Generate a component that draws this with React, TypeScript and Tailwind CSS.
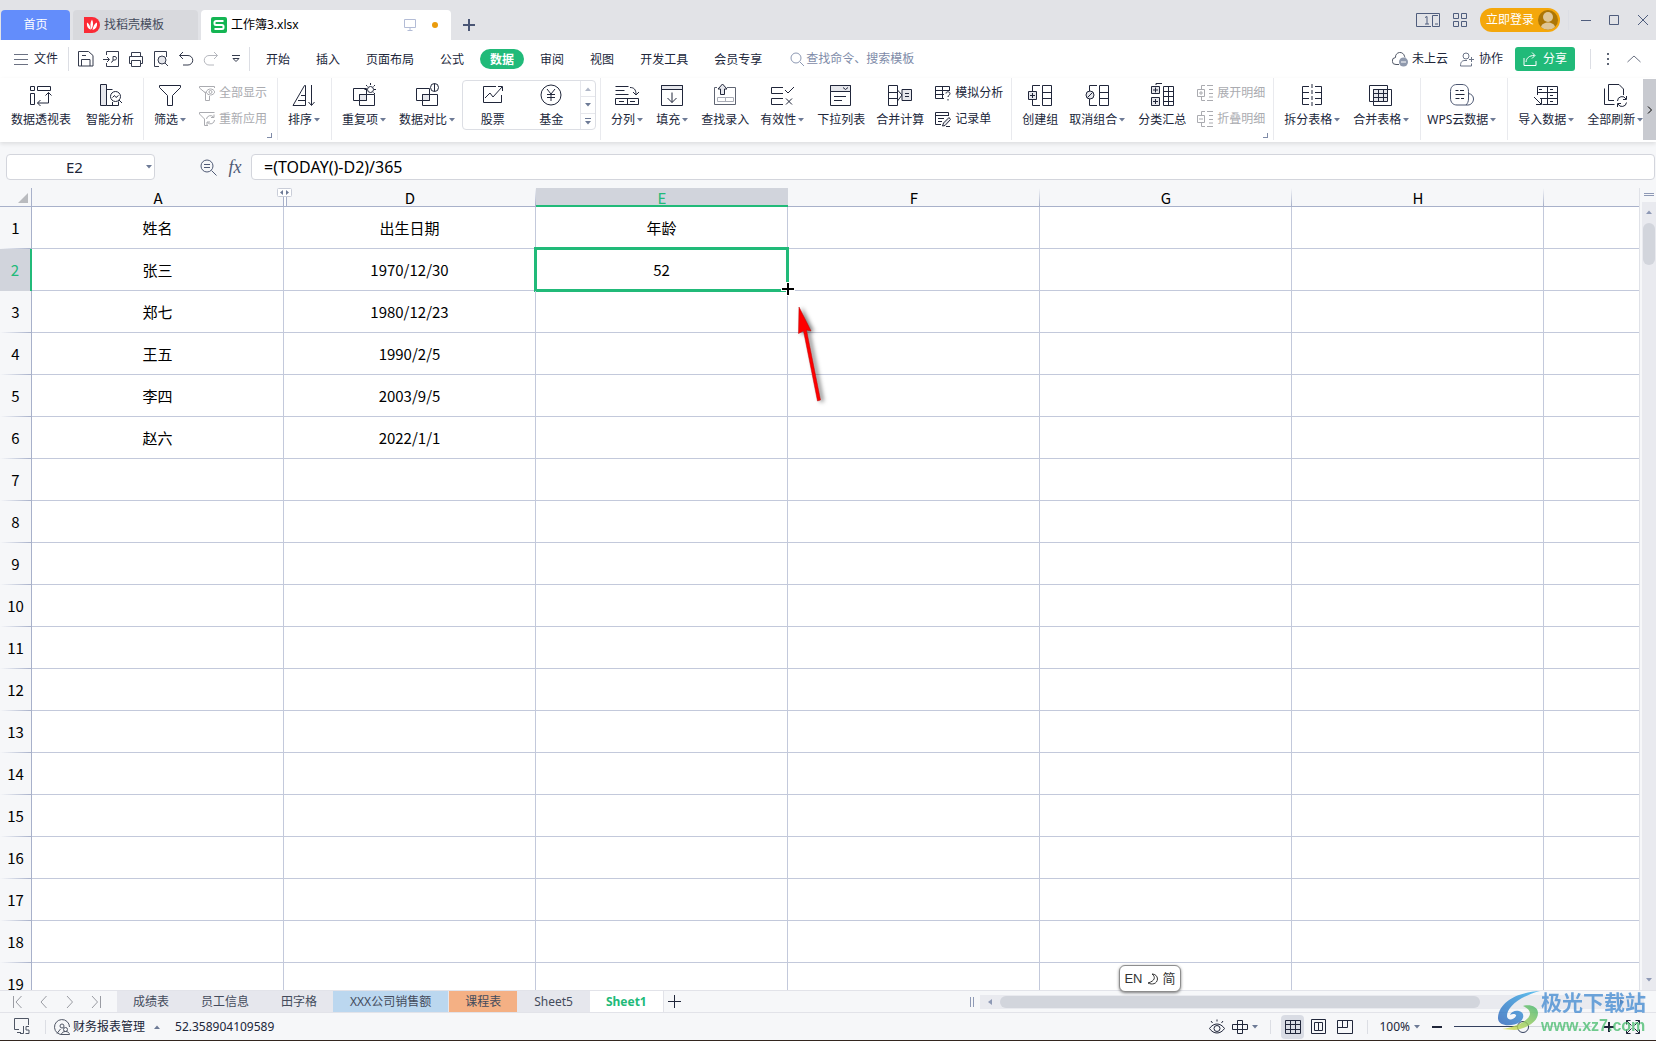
import type { ReactNode } from "react";
import { clsx } from "clsx";

/* ---------- icons ---------- */

type IconProps = { children: ReactNode; size?: number; className?: string };

function Icon({ children, size = 24, className }: IconProps) {
  return (
    <svg
      width={size}
      height={size}
      viewBox={`0 0 ${size} ${size}`}
      fill="none"
      stroke="currentColor"
      aria-hidden="true"
      className={clsx("shrink-0", className)}
    >
      {children}
    </svg>
  );
}

const icons = {
  pivot: (
    <Icon>
      <path d="M1.5 3.5h4v4h-4zM8.5 3.5h13v4h-13zM1.5 10.5h4v11h-4z" />
      <path d="M19.500 9.500v10.500h-11M16.500 12.500l3-3 3 3M11.500 17L8.500 20l3 3" />
    </Icon>
  ),
  analyse: (
    <Icon>
      <path d="M2.5 1.5h6v21h-6z" fill="#e6e7ec" />
      <path d="M8.500 6.500h6M8.500 22.500h12v-4M14.500 19v3.500" />
      <circle cx="17.500" cy="13.500" r="5" />
      <path d="M14.500 14.500l2-2 1.500 2 2.500-2M21 17l4 4" />
    </Icon>
  ),
  filter: (
    <Icon>
      <path d="M1.5 2.500h21v2l-8 8v10h-5v-10l-8-8z" />
    </Icon>
  ),
  sort: (
    <Icon>
      <path d="M1 22.500L12.500 2.500h1v20zM6 17.500h7.500M9 12.500h4.500M19.500 2v20M16.500 19l3 3.500 3-3.500" />
    </Icon>
  ),
  duplicate: (
    <Icon>
      <path d="M1.500 5.500h13v12h-13zM7.500 11.500h15v11h-15z" />
      <path d="M7.500 11.500h7v6h-7z" fill="#e6e7ec" />
      <circle cx="18.500" cy="6.500" r="3" fill="#fff" />
      <path d="M18.500 0v2M12.500 6.500h2M22 6.500h2M14 2l1.500 1.500M23 2l-1.500 1.500M23 11l-1.500-1.500" />
    </Icon>
  ),
  compare: (
    <Icon>
      <path d="M1.500 5.500h13v12h-13zM7.500 11.500h15v11h-15z" />
      <path d="M7.500 11.500h7v6h-7z" fill="#e6e7ec" />
      <circle cx="19.500" cy="4.500" r="4" fill="#fff" />
      <path d="M19.500.5v8" />
    </Icon>
  ),
  stock: (
    <Icon>
      <path d="M15 3.500H2.500v16h18V12M4 15l5-5 3 4 9-10M17 3.500h4.500V8" />
    </Icon>
  ),
  fund: (
    <Icon>
      <circle cx="12" cy="12" r="10" />
      <path d="M8 6l4 5 4-5M8 11.500h8M8 14.500h8M12 11v7" />
    </Icon>
  ),
  split: (
    <Icon>
      <path d="M.5 3.500h13M.5 7.500h9M.5 11.500h13M.5 15.500h23v6H.500zM12.500 15.500v6M4 18.500h5M15 18.500h5" />
      <path d="M15 4.500c4 0 6 2 6 7M18 9l3 3 3-3" />
    </Icon>
  ),
  fill: (
    <Icon>
      <path d="M1.500 2.500h21v20h-21z" />
      <path d="M1.500 2.500h21v4h-21z" fill="#e6e7ec" />
      <path d="M12 9.500v10M7.500 15l4.500 4.500 4.500-4.500" />
    </Icon>
  ),
  lookup: (
    <Icon>
      <path d="M4 4.500H1.500v17h21v-17H14" stroke="#5f6472" />
      <path d="M4.500 14.500h16v4h-16zM12.500 14.500v4" stroke="#a9acb6" />
      <path d="M9.500 1L5 6h2.500v5.500h4V6H14z" fill="#e6e7ec" />
    </Icon>
  ),
  validity: (
    <Icon>
      <path d="M13 4.500H1.500v6H13M13 15.500H1.500v6H13M15 7l3 3 6-6M16 15.500l6 6M22 15.500l-6 6" />
    </Icon>
  ),
  dropdown: (
    <Icon>
      <path d="M1.500 2.500h20v20h-20z" />
      <path d="M1.500 2.500h20v6h-20z" fill="#e6e7ec" />
      <path d="M14 4.500l2.500 2L19 4.500M5 13.500h12M5 17.500h8" />
    </Icon>
  ),
  consolidate: (
    <Icon>
      <path d="M.5 2.500h9v20h-9zM.5 9.500h9M.5 15.500h9M9.500 7l4.500 5-4.500 6" />
      <path d="M14 6.500h9.500v11H14z" fill="#e6e7ec" />
      <path d="M17 10.500h4M17 13.500h4" />
    </Icon>
  ),
  group: (
    <Icon>
      <path d="M12 2.500H4.500v6M4.500 17v5.500H12M14.500 2.500h9v20h-9zM14.500 9.500h9M14.500 15.500h9" />
      <path d="M.5 8.500h8v8h-8z" fill="#e6e7ec" />
      <path d="M2 12.500h5M4.500 10v5" />
    </Icon>
  ),
  ungroup: (
    <Icon>
      <path d="M12 2.500H4.500v6M4.500 16v6.500H12M14.500 2.500h9v20h-9zM14.500 9.500h9M14.500 15.500h9" />
      <circle cx="5" cy="12" r="4" fill="#e6e7ec" />
      <path d="M2.500 14.500l5-5" />
    </Icon>
  ),
  subtotal: (
    <Icon>
      <path d="M6 2V.5h6M13.500 3.500h10v19h-10zM18.500 3.500v19M13.500 8.500h10M13.500 13.500h10M13.500 18.500h10" />
      <path d="M1.500 3.500h8v7h-8zM1.500 14.500h8v8h-8z" fill="#e6e7ec" />
      <path d="M3 7h5M5.500 4.500v5M3 18.500h5M5.500 16v5" />
    </Icon>
  ),
  splitTable: (
    <Icon>
      <path d="M9 3.500H2.500v18H9M15 3.500h6.500v18H15M2.500 9.500H9M2.500 15.500H9M15 9.500h6.500M15 15.500h6.500" />
      <path d="M12 1v22" strokeDasharray="4 2" />
    </Icon>
  ),
  mergeTable: (
    <Icon>
      <path d="M4 18.500H.500v-16h18V6" />
      <path d="M4.500 6.500h18v16h-18z" fill="#fff" />
      <path d="M4.500 6.500h14v12h-14z" fill="#e6e7ec" />
      <path d="M4.500 10.500h14M4.500 14.500h14M9.500 6.500v12M14.500 6.500v12" />
    </Icon>
  ),
  cloudData: (
    <Icon>
      <path d="M18 22H7c-4 0-6.500-2.500-6.500-7V8.500C.500 4 3 1.500 7 1.500h5c4 0 6.500 2.500 6.500 7V16c0 2.500-1 4.500-2.500 6M18.500 10.500c3 .5 5 2.500 5 5.500s-2.500 6-5.500 6" stroke="#4a5570" />
      <path d="M5.500 7.500h3M10 7.500h4M5.500 11.500h9M5.500 15.500h4M11 15.500h3" />
    </Icon>
  ),
  importData: (
    <Icon>
      <path d="M3.500 12V3.500h20v18h-15M3.500 9.500h20M6 15.500h17M13.500 3.500v18M5 6.500h3M16 6.500h3M16 12.500h3M16 18.500h3" />
      <path d="M0 14l7 7M7.500 16v5.500H2" />
    </Icon>
  ),
  refreshAll: (
    <Icon>
      <path d="M1.500 5.500v16h10M11 17.500H5.500v-16H16l4.500 4.500v6" />
      <path d="M14.500 18a4.500 4.500 0 0 1 8.500-2M23.500 13v3.500H20M23.500 19.500a4.500 4.500 0 0 1-8.500 1.500M14.500 24v-3.500H18" />
    </Icon>
  ),
  whatIf: (
    <Icon size={16}>
      <path d="M9 13.500H.5V1.500h14V6M.5 5.500h14M.5 9.500H9M7.500 1.500v12" />
      <path d="M11 8.500c0-2.500 4-2 4 0s-2 1.500-2 3.500M13 14v1.500" />
    </Icon>
  ),
  record: (
    <Icon size={16}>
      <path d="M6 13.500H.5v-12h13V5M.5 4.500h13M3 7.500h6M3 10.500h4" />
      <path d="M7.500 15l1-3L14 6.500l1.500 2L10 14.500zM11 15.500h4" fill="#e6e7ec" />
    </Icon>
  ),
  showAll: (
    <Icon size={16}>
      <path d="M7 8L5.500 7M10.500 11v4.500h-4V8L.5 3V1.500h15V3" />
      <path d="M7 7c2-4 7-4 9 0-2 4-7 4-9 0z" fill="#fff" />
      <circle cx="11.500" cy="7" r="1.500" />
    </Icon>
  ),
  reapply: (
    <Icon size={16}>
      <path d="M9 14.500H5.500V8L.5 3V1.500h15" />
      <path d="M7.500 8a4 4 0 0 1 7-2M15 3.500V6.500h-3M15.500 9a4 4 0 0 1-7 2.500M8 14v-3h3" />
    </Icon>
  ),
  expand: (
    <Icon size={16}>
      <path d="M8 .5H4.500v4M4.500 11.500v4H8M10 .5h6M12 4.500h4M12 8.500h4M12 12h4M10 15.500h6" />
      <path d="M.5 4.500h7v7h-7zM2 8h4M4 6v4" />
    </Icon>
  ),
  collapse: (
    <Icon size={16}>
      <path d="M8 .5H4.500v4M4.500 11.500v4H8M10 .5h6M12 4.500h4M12 8.500h4M12 12h4M10 15.500h6" />
      <path d="M.5 4.500h7v7h-7zM2 8h4" />
    </Icon>
  ),
  save: (
    <Icon size={16}>
      <path d="M.5.5h10l4.500 4v10.500H.5zM3.500 15V8.500h8.500V15M4 4.500h4" />
    </Icon>
  ),
  exportPdf: (
    <Icon size={16}>
      <path d="M3.500 4V.5h12v15h-12V12M0 8.500h6M4 6l2.500 2.500L4 11" />
      <path d="M8 11.500l2-1.500V5.500h2c2 0 2 3.500 0 3.500h-2" />
    </Icon>
  ),
  print: (
    <Icon size={16}>
      <path d="M3.500 5V1.500h9V5M3 12.500H1.500v-7h13v7H13M3.500 9.500h9v6h-9z" />
    </Icon>
  ),
  preview: (
    <Icon size={16}>
      <path d="M6 15.500H1.500v-15h12V6" />
      <circle cx="9" cy="9" r="4" fill="#e6e7ec" />
      <path d="M12 12l3 3" />
    </Icon>
  ),
  undo: (
    <Icon size={16}>
      <path d="M5 1L1.500 4.500 5 8M1.500 4.500H10a4.500 4.500 0 0 1 0 9.500H5" />
    </Icon>
  ),
  redo: (
    <Icon size={16}>
      <path d="M11 1l3.500 3.500L11 8M14.500 4.500H6A4.500 4.500 0 0 0 6 14h5" />
    </Icon>
  ),
};

function Caret({ up = false, className }: { up?: boolean; className?: string }) {
  return (
    <svg width="6" height="4" viewBox="0 0 6 4" aria-hidden="true" className={clsx("shrink-0", className ?? "text-[#6d7a96]")}>
      <path d={up ? "M0 4h6L3 .5z" : "M0 0h6L3 3.500z"} fill="currentColor" />
    </svg>
  );
}

function Sep({ className }: { className?: string }) {
  return <span className={clsx("w-px shrink-0 bg-[#dcdee4]", className)} />;
}

/* ---------- title bar ---------- */

function TitleBar() {
  return (
    <header className="flex h-10 shrink-0 items-end bg-[#e2e3e7] text-[#444b5c]">
      <button className="ml-px h-[30px] w-[69px] rounded-t-sm bg-[#638dfb] text-white">首页</button>
      <button className="ml-[3px] flex h-[30px] w-[125px] items-center gap-1 rounded-t-sm bg-[#d8d9dd] pl-[11px]">
        <svg width="16" height="16" viewBox="0 0 16 16" aria-hidden="true">
          <path d="M0 0h8a8 8 0 1 1 0 16H0z" fill="#fb2b36" />
          <path d="M8 2.500c1.500 3 1.500 6-.5 10C6 9 6 6 8 2.500zM3 5.500c2 1 3 3.500 4 7-3-.5-4.500-3-4-7zM13 5.500c.5 4-1 6.500-4.500 7.500C9 9.500 10.500 6.500 13 5.500z" fill="#fff" />
        </svg>
        找稻壳模板
      </button>
      <button className="ml-[3px] flex h-[30px] w-[250px] items-center gap-1 rounded-t-sm bg-white pl-2.5 text-black">
        <svg width="16" height="16" viewBox="0 0 16 16" fill="none" aria-hidden="true">
          <rect width="16" height="16" rx="2" fill="#14b553" />
          <path d="M12.500 4H5a1.500 1.500 0 0 0-1.500 1.500v1C3.500 7.500 4 8 5 8h6c1 0 1.500.5 1.500 1.500v1c0 1-.5 1.500-1.500 1.500H3.500" stroke="#fff" strokeWidth="2" />
        </svg>
        工作簿3.xlsx
        <Icon size={12} className="mr-3 ml-auto text-[#b3bcd6]">
          <path d="M.5.5h11v8H.5zM6 8.500v3M3.500 11.500h5" />
        </Icon>
        <span className="mr-[13px] size-1.5 rounded-full bg-[#ea9b0c]" />
      </button>
      <button aria-label="新建标签" className="mb-[9px] ml-3 text-[#4a5675]">
        <Icon size={12}><path d="M6 0v12M0 6h12" strokeWidth="2" /></Icon>
      </button>

      <div className="ml-auto flex h-10 items-center text-[#4f5d7d]">
        <svg width="24" height="14" viewBox="0 0 24 14" fill="none" stroke="currentColor" aria-hidden="true">
          <path d="M15 13.500H.5V.5h23v13h-7v-11H22M9 4.500l2-1v7.500M9 11h4M19 11h3" />
        </svg>
        <Icon size={14} className="ml-[13px]">
          <path d="M.5.5h5v5h-5zM8.500.5h5v5h-5zM.5 8.500h5v5h-5zM8.500 8.500h5v5h-5z" />
        </Icon>
        <button className="ml-[13px] flex h-6 items-center gap-1 rounded-full bg-[#f4a70b] pr-0.5 pl-1.5 text-white">
          立即登录
          <svg width="20" height="20" viewBox="0 0 20 20" aria-hidden="true">
            <circle cx="10" cy="10" r="10" fill="#ad7604" />
            <circle cx="10" cy="7" r="5" fill="#dfc696" />
            <path d="M3 17c1-6 13-6 14 0a10 10 0 0 1-14 0z" fill="#dfc696" />
          </svg>
        </button>
        <Sep className="ml-2 h-5 bg-[#c9cbd2]" />
        <button aria-label="最小化" className="ml-3"><Icon size={10}><path d="M0 5.500h10" /></Icon></button>
        <button aria-label="最大化" className="ml-[18px]"><Icon size={10}><path d="M.5.5h9v9h-9z" /></Icon></button>
        <button aria-label="关闭" className="mr-2 ml-[19px]"><Icon size={10}><path d="M0 0l10 10M10 0L0 10" /></Icon></button>
      </div>
    </header>
  );
}

/* ---------- menu row ---------- */

const MENU = ["开始", "插入", "页面布局", "公式", "数据", "审阅", "视图", "开发工具", "会员专享"];

function MenuRow() {
  return (
    <div className="flex h-[38px] shrink-0 items-center bg-white text-[#20263a]">
      <button className="ml-[14px] flex items-center gap-1.5">
        <Icon size={14} className="text-[#6b7182]"><path d="M0 2.500h14M0 7.500h14M0 12.500h14" /></Icon>
        文件
      </button>
      <Sep className="mr-[9px] ml-2.5 h-6" />
      <div className="flex items-center gap-[9px] text-[#353b4d]">
        <button aria-label="保存">{icons.save}</button>
        <button aria-label="输出为PDF">{icons.exportPdf}</button>
        <button aria-label="打印">{icons.print}</button>
        <button aria-label="打印预览">{icons.preview}</button>
        <button aria-label="撤销">{icons.undo}</button>
        <button aria-label="恢复" className="text-[#b6b8be]">{icons.redo}</button>
        <button aria-label="自定义" className="ml-1">
          <Icon size={8}><path d="M0 .5h8M1 3.500h6L4 6.500z" /></Icon>
        </button>
      </div>
      <Sep className="ml-[9px] h-6" />
      <nav className="ml-1.5 flex items-center gap-1.5">
        {MENU.map((m) => (
          <button
            key={m}
            className={clsx(
              "h-5 rounded-full px-2.5 leading-[22px] whitespace-nowrap",
              m === "数据" && "bg-[#21ba79] font-bold text-white",
            )}
          >
            {m}
          </button>
        ))}
      </nav>
      <label className="ml-[18px] flex items-center gap-0.5 text-[#8d99b3]">
        <Icon size={14}><circle cx="6" cy="6" r="5" /><path d="M10 10l4 4" /></Icon>
        <input
          aria-label="查找命令"
          placeholder="查找命令、搜索模板"
          className="w-[112px] bg-transparent outline-none placeholder:text-[#7e8ba8]"
        />
      </label>

      <div className="ml-auto flex items-center leading-[22px] whitespace-nowrap">
        <button className="flex items-center gap-1">
          <Icon size={16} className="text-[#4f5665]">
            <path d="M7 13.500H4A3.500 3.500 0 0 1 3.500 6.500a4.500 4.500 0 0 1 9-1c.5 0 .5.500.5 1" />
            <circle cx="11.500" cy="11" r="4.500" fill="#8f99ad" stroke="none" />
            <path d="M9 11h5" stroke="#fff" />
          </Icon>
          未上云
        </button>
        <button className="ml-3 flex items-center gap-1">
          <Icon size={15} className="text-[#6c7588]">
            <circle cx="6" cy="4" r="3" />
            <path d="M7 8.500H5C2 8.500.5 10 .5 14h11v-2.500M11.500 5v5M9 7.500h5" />
          </Icon>
          协作
        </button>
        <button className="ml-3 flex h-6 items-center gap-1.5 rounded-[3px] bg-[#21ba79] px-2 text-white">
          <Icon size={14}><path d="M1 6v7.500h12V9M3 10c.5-4 3-6.500 8.500-6.500M9 .5l3 3-3 3" /></Icon>
          分享
        </button>
        <Sep className="ml-[15px] h-5" />
        <button aria-label="更多" className="ml-4">
          <svg width="2" height="12" viewBox="0 0 2 12" fill="#5f6675" aria-hidden="true">
            <path d="M0 0h2v2H0zM0 5h2v2H0zM0 10h2v2H0z" />
          </svg>
        </button>
        <button aria-label="收起功能区" className="mr-[15px] ml-[18px]">
          <Icon size={14} className="text-[#6b7182]"><path d="M.5 10L7 4l6.500 6" /></Icon>
        </button>
      </div>
    </div>
  );
}

/* ---------- ribbon ---------- */

function Tool({ icon, label, menu }: { icon: ReactNode; label: string; menu?: boolean }) {
  return (
    <button className={clsx("flex shrink-0 flex-col items-center gap-[5px] whitespace-nowrap", menu ? "mr-px" : "-mr-px")}>
      {icon}
      <span className="flex items-center leading-4">
        {label}
        {menu && <Caret className="ml-0.5 text-[#6d7a96]" />}
      </span>
    </button>
  );
}

function SmallPair({ items, disabled }: { items: [ReactNode, string][]; disabled?: boolean }) {
  return (
    <div className={clsx("flex shrink-0 flex-col gap-2.5 pt-0.5", disabled && "text-[#aaabb0]")}>
      {items.map(([icon, label]) => (
        <button key={label} disabled={disabled} className="flex items-center gap-1 leading-4 whitespace-nowrap">
          {icon}
          {label}
        </button>
      ))}
    </div>
  );
}

function Group({ children, launcher, className }: { children: ReactNode; launcher?: boolean; className?: string }) {
  return (
    <div className={clsx("relative flex h-[62px] shrink-0 border-r border-[#e9eaee] pt-[5px]", className ?? "gap-3 px-2.5")}>
      {children}
      {launcher && (
        <span className="absolute right-[5px] bottom-0.5 size-[5px] border-r border-b border-[#7f8ba8]" />
      )}
    </div>
  );
}

function Ribbon() {
  return (
    <div className="relative z-10 flex h-16 shrink-0 bg-white text-[#20263a] shadow-[0_2px_4px_rgba(0,0,0,0.10)]">
      <div className="flex min-w-0 flex-1 overflow-hidden">
        <Group className="gap-4 pr-2.5 pl-[11px]">
          <Tool icon={icons.pivot} label="数据透视表" />
          <Tool icon={icons.analyse} label="智能分析" />
        </Group>
        <Group launcher>
          <Tool icon={icons.filter} label="筛选" menu />
          <SmallPair disabled items={[[icons.showAll, "全部显示"], [icons.reapply, "重新应用"]]} />
        </Group>
        <Group>
          <Tool icon={icons.sort} label="排序" menu />
        </Group>
        <Group className="gap-3 pr-1 pl-2.5">
          <Tool icon={icons.duplicate} label="重复项" menu />
          <Tool icon={icons.compare} label="数据对比" menu />
          <div className="-mt-[3px] -ml-1.5 flex h-[50px] shrink-0 rounded-sm border border-[#dcdee4]">
            <div className="flex w-[117px] justify-around pt-0.5">
              <Tool icon={icons.stock} label="股票" />
              <Tool icon={icons.fund} label="基金" />
            </div>
            <div className="flex w-[15px] flex-col divide-y divide-[#e6e7ec] border-l border-[#e6e7ec]">
              <button aria-label="上一行" className="flex flex-1 items-center justify-center"><Caret up className="text-[#b0b7c7]" /></button>
              <button aria-label="下一行" className="flex flex-1 items-center justify-center"><Caret /></button>
              <button aria-label="展开" className="flex flex-1 flex-col items-center justify-center gap-0.5">
                <span className="h-px w-1.5 bg-[#6d7a96]" />
                <Caret />
              </button>
            </div>
          </div>
        </Group>
        <Group className="gap-3 pr-2 pl-2.5">
          <Tool icon={icons.split} label="分列" menu />
          <Tool icon={icons.fill} label="填充" menu />
          <Tool icon={icons.lookup} label="查找录入" />
          <Tool icon={icons.validity} label="有效性" menu />
          <Tool icon={icons.dropdown} label="下拉列表" />
          <Tool icon={icons.consolidate} label="合并计算" />
          <SmallPair items={[[icons.whatIf, "模拟分析"], [icons.record, "记录单"]]} />
        </Group>
        <Group launcher className="gap-3 pr-2 pl-2.5">
          <Tool icon={icons.group} label="创建组" />
          <Tool icon={icons.ungroup} label="取消组合" menu />
          <Tool icon={icons.subtotal} label="分类汇总" />
          <SmallPair disabled items={[[icons.expand, "展开明细"], [icons.collapse, "折叠明细"]]} />
        </Group>
        <Group>
          <Tool icon={icons.splitTable} label="拆分表格" menu />
          <Tool icon={icons.mergeTable} label="合并表格" menu />
        </Group>
        <Group className="pr-2.5 pl-1.5">
          <Tool icon={icons.cloudData} label="WPS云数据" menu />
        </Group>
        <Group>
          <Tool icon={icons.importData} label="导入数据" menu />
          <Tool icon={icons.refreshAll} label="全部刷新" menu />
        </Group>
      </div>
      <button aria-label="向右滚动" className="mt-px flex h-[61px] w-[13px] shrink-0 items-center justify-center bg-[#c8cad0] text-black">
        <Icon size={8}><path d="M2 .5L5.500 4 2 7.500" /></Icon>
      </button>
    </div>
  );
}

/* ---------- formula bar ---------- */

function FormulaBar() {
  return (
    <div className="flex h-[46px] shrink-0 items-center bg-[#f6f7f9] pt-1.5 pb-0.5 text-[#20263a]">
      <div className="ml-1.5 flex h-[26px] w-[149px] items-center rounded-sm border border-[#d3d5dc] bg-white pr-0.5">
        <input aria-label="名称框" defaultValue="E2" className="min-w-0 flex-1 bg-transparent pr-1 text-center text-[15px] outline-none" />
        <Caret />
      </div>
      <div className="ml-[45px] flex items-center gap-2.5 text-[#4f5a75]">
        <Icon size={17}><circle cx="7" cy="7" r="6" /><path d="M11.500 11.500l5 5M4 5.500h6M4 8.500h6" /></Icon>
        <button className="w-4 font-['Liberation_Serif',serif] text-[18px] leading-5 italic">fx</button>
      </div>
      <input
        aria-label="编辑栏"
        defaultValue="=(TODAY()-D2)/365"
        className="mr-px ml-2 h-[26px] min-w-0 flex-1 rounded-sm border border-[#d3d5dc] bg-white px-3 text-base text-black outline-none"
      />
    </div>
  );
}

/* ---------- sheet ---------- */

const COLUMNS = ["A", "D", "E", "F", "G", "H"];
const DATA: string[][] = [
  ["姓名", "出生日期", "年龄"],
  ["张三", "1970/12/30", "52"],
  ["郑七", "1980/12/23"],
  ["王五", "1990/2/5"],
  ["李四", "2003/9/5"],
  ["赵六", "2022/1/1"],
];
const ROWS = Array.from({ length: 19 }, (_, i) => DATA[i] ?? []);

function HiddenColumnsMark() {
  return (
    <span className="absolute -right-2 bottom-0 flex h-[18px] w-[15px] flex-col items-center">
      <svg width="15" height="9" viewBox="0 0 15 9" aria-hidden="true">
        <rect x=".5" y=".5" width="14" height="8" rx="1" fill="#fff" stroke="#c9cdd8" />
        <path d="M6 2v5L3 4.500zM9 2v5l3-2.500z" fill="#6d7a96" />
      </svg>
      <span className="h-[9px] w-1 border-x border-[#a8b1ca] bg-white" />
    </span>
  );
}

function FillCursor() {
  return (
    <svg width="14" height="14" viewBox="0 0 14 14" aria-hidden="true" className="absolute -right-2 -bottom-1.5 z-10">
      <path d="M7 0v14M0 7h14" stroke="#fff" strokeWidth="4" />
      <path d="M7 1v12M1 7h12" stroke="#000" strokeWidth="2" />
    </svg>
  );
}

function Arrow() {
  return (
    <svg
      width="36"
      height="110"
      viewBox="0 0 36 110"
      aria-hidden="true"
      className="absolute top-[14px] left-2 z-10 drop-shadow-[3px_1px_2px_rgba(0,0,0,0.5)]"
    >
      <path d="M3 2l12 24-4.500-1L24.500 95l-3 1L7.500 26 2.500 28.500z" fill="#fe0000" stroke="#b80000" strokeWidth=".5" />
    </svg>
  );
}

function Sheet() {
  return (
    <main className="flex min-h-0 flex-1 bg-[#f6f7f9]">
      <div className="min-w-0 flex-1 overflow-hidden border-r border-[#e0e2e8] bg-white font-['Noto_Sans_CJK_SC',sans-serif] text-[15px] text-black">
        <table className="w-full table-fixed border-separate border-spacing-0 text-center leading-5">
          <colgroup>
            <col className="w-8" />
            {COLUMNS.map((c) => <col key={c} className="w-[252px]" />)}
            <col />
          </colgroup>
          <thead>
            <tr className="h-[19px] bg-[#f6f7f9]">
              <th className="relative border-r border-b border-[#a8b1ca] p-0">
                <span className="absolute right-[3px] bottom-[3px] size-2.5 bg-[#b9bbbf] [clip-path:polygon(100%_0,100%_100%,0_100%)]" />
              </th>
              {COLUMNS.map((c) => (
                <th
                  key={c}
                  className={clsx(
                    "relative h-[19px] p-0 font-normal",
                    c === "E"
                      ? "border-b-2 border-[#21ba79] bg-[#d1d4dc] text-[#21ba79]"
                      : "border-b border-[#a8b1ca]",
                    c !== "E" && c !== "A" && "bg-[linear-gradient(to_bottom,transparent,#a8b1ca)] bg-[length:1px_100%] bg-right bg-no-repeat",
                  )}
                >
                  <span className="block h-4 leading-[18px]">{c}</span>
                  {c === "A" && <HiddenColumnsMark />}
                </th>
              ))}
              <th className="border-b border-[#a8b1ca] p-0" />
            </tr>
          </thead>
          <tbody>
            {ROWS.map((row, r) => (
              <tr key={r}>
                <th
                  scope="row"
                  className={clsx(
                    "h-[42px] p-0 font-normal",
                    r === 1
                      ? "border-r-2 border-[#21ba79] bg-[#d1d4dc] text-[#21ba79]"
                      : "border-r border-[#a8b1ca] bg-[#f6f7f9] bg-[linear-gradient(to_right,transparent,#a8b1ca)] bg-[length:100%_1px] bg-bottom bg-no-repeat",
                  )}
                >
                  {r + 1}
                </th>
                {COLUMNS.map((c, i) => (
                  <td key={c} className="relative h-[42px] border-r border-b border-[#c3c9db] p-0">
                    {row[i]}
                    {r === 1 && c === "E" && (
                      <>
                        <span className="absolute -inset-0.5 border-[3px] border-[#21ba79]" />
                        <FillCursor />
                      </>
                    )}
                    {r === 2 && c === "F" && <Arrow />}
                  </td>
                ))}
                <td className="border-b border-[#c3c9db] p-0" />
              </tr>
            ))}
          </tbody>
        </table>
      </div>
      <div className="ml-0.5 flex w-[14px] shrink-0 flex-col">
        <span className="mx-auto mt-[5px] mb-1.5 h-[3px] w-2.5 border-y border-[#8e99b5]" />
        <div className="flex flex-1 flex-col items-center bg-[#e9eaef] py-2">
          <Caret up className="text-[#8e99b5]" />
          <span className="mt-[9px] h-[42px] w-3 rounded-full bg-[#d2d5dc]" />
          <Caret className="mt-auto text-[#8e99b5]" />
        </div>
      </div>
    </main>
  );
}

/* ---------- bottom bars ---------- */

const SHEETS = [
  { name: "成绩表", tone: "bg-[#e6e7ed] px-4" },
  { name: "员工信息", tone: "bg-[#e6e7ed] px-4" },
  { name: "田字格", tone: "bg-[#e6e7ed] px-4" },
  { name: "XXX公司销售额", tone: "bg-[#bbd7ef] px-[17px] border-r border-[#e6e7ed]" },
  { name: "课程表", tone: "bg-[#f4b084] px-4" },
  { name: "Sheet5", tone: "bg-[#e6e7ed] px-[17px]" },
  { name: "Sheet1", tone: "bg-white px-4 font-bold text-[#21ba79]" },
];

function SheetTabs() {
  return (
    <div className="flex h-[23px] shrink-0 border-y border-[#e2e3e9] bg-[#f6f7f9] text-[#444b5c]">
      <div className="flex w-[117px] shrink-0 items-center gap-3 pl-3 text-[#9a9ca3]">
        <button aria-label="第一个"><Icon size={14}><path d="M1.500 1v12M9.500 1L4 7l5.500 6" /></Icon></button>
        <button aria-label="上一个"><Icon size={14}><path d="M8.500 1L3 7l5.500 6" /></Icon></button>
        <button aria-label="下一个"><Icon size={14}><path d="M3 1l5.500 6L3 13" /></Icon></button>
        <button aria-label="最后一个"><Icon size={14}><path d="M2 1l5.500 6L2 13M10.500 1v12" /></Icon></button>
      </div>
      {SHEETS.map((s) => (
        <button key={s.name} className={clsx("shrink-0 leading-[22px] whitespace-nowrap", s.tone)}>
          {s.name}
        </button>
      ))}
      <button aria-label="新建工作表" className="border-l border-[#e2e3e9] px-1 text-[#20263a]">
        <Icon size={13}><path d="M6.500 0v13M0 6.500h13" /></Icon>
      </button>
      <div className="ml-auto flex w-[686px] items-center pr-3">
        <span className="mr-1.5 h-2.5 w-1 border-x border-[#8e99b5]" />
        <div className="flex h-[14px] flex-1 items-center bg-[#e9eaef]">
          <svg width="4" height="6" viewBox="0 0 4 6" className="mx-2 text-[#8e99b5]" aria-hidden="true">
            <path d="M4 0v6L0 3z" fill="currentColor" />
          </svg>
          <span className="h-3 w-[480px] rounded-full bg-[#d2d5dc]" />
          <svg width="4" height="6" viewBox="0 0 4 6" className="mr-5 ml-auto text-[#5f7fae]" aria-hidden="true">
            <path d="M0 0v6l4-3z" fill="currentColor" />
          </svg>
        </div>
      </div>
    </div>
  );
}

function StatusBar() {
  return (
    <footer className="flex h-7 shrink-0 items-center border-b border-[#33261f] bg-[#f6f7f9] text-[#20263a]">
      <button aria-label="宏" className="ml-[13px] text-[#4f5665]">
        <Icon size={17}><path d="M6 11.500H1.500V.5h14V4M4 14.500h4M10.500 8v7.500H7M16 8.500h-3v3.500h3v3.500h-3.500M15.500 4v3" /></Icon>
      </button>
      <Sep className="ml-[15px] h-[14px]" />
      <button className="ml-2 flex items-center gap-[3px] text-[#20263a]">
        <Icon size={16} className="text-[#4f5665]">
          <path d="M9 15.500A7.500 7.500 0 1 1 15.500 8M3 14.500L6.500 10" />
          <circle cx="8" cy="7" r="2" />
          <circle cx="11.500" cy="10.500" r="2" />
          <path d="M7.500 15.500c0-4 8-4 8 0z" />
        </Icon>
        财务报表管理
        <Caret up className="ml-1.5 text-[#6d7a96]" />
      </button>
      <output className="ml-[15px]">52.358904109589</output>

      <div className="ml-auto flex items-center pr-4">
        <button aria-label="护眼模式">
          <Icon size={16}>
            <path d="M.5 9.500c4-6 11-6 15 0-4 6-11 6-15 0zM8 .5v2M2 2l1.500 2M14 2l-1.500 2" />
            <circle cx="8" cy="9.500" r="3" />
          </Icon>
        </button>
        <button aria-label="阅读模式" className="ml-[7px] flex items-center gap-1">
          <Icon size={16}><path d="M5.500 1.500h5v13h-5zM.5 5.500h15v5H.5z" /></Icon>
          <Caret />
        </button>
        <Sep className="ml-3 h-[14px]" />
        <button aria-label="普通视图" className="ml-2.5 flex h-6 w-[23px] items-center justify-center rounded-sm bg-[#d9dce4]">
          <Icon size={16}><path d="M.5 1.500h15v13H.5zM.5 5.500h15M.5 10.500h15M5.500 1.500v13M10.500 1.500v13" /></Icon>
        </button>
        <button aria-label="页面布局视图" className="ml-[7px]">
          <Icon size={15}><path d="M.5.5h14v14H.5zM3.500 3.500h4v8h-4zM7.500 3.500h4v8h-4z" /></Icon>
        </button>
        <button aria-label="分页预览" className="ml-[11px]">
          <Icon size={16}><path d="M.5 1.500h15v13H.5zM5.500 1.500v7M.5 8.500h10M10.500 1.500v7" /></Icon>
        </button>
        <Sep className="ml-[14px] h-[14px]" />
        <button className="ml-[11px] flex items-center gap-1">100% <Caret /></button>
        <button aria-label="缩小" className="ml-3"><Icon size={10}><path d="M0 5h10" strokeWidth="2" /></Icon></button>
        <input
          type="range"
          aria-label="缩放"
          defaultValue={50}
          className="mx-3 h-3 w-[138px] appearance-none bg-[linear-gradient(to_right,#33405e_50%,#d2d5dc_50%)] bg-[length:100%_1px] bg-center bg-no-repeat [&::-webkit-slider-thumb]:size-3 [&::-webkit-slider-thumb]:appearance-none [&::-webkit-slider-thumb]:rounded-full [&::-webkit-slider-thumb]:border [&::-webkit-slider-thumb]:border-[#33405e] [&::-webkit-slider-thumb]:bg-[#f6f7f9]"
        />
        <button aria-label="放大"><Icon size={10}><path d="M0 5h10M5 0v10" strokeWidth="2" /></Icon></button>
        <button aria-label="全屏" className="ml-3">
          <Icon size={14}><path d="M.5 4.500v-4h4M9.500.5h4v4M13.500 9.500v4h-4M4.500 13.500h-4v-4M.5.5l5 5M13.500.5l-5 5M13.500 13.500l-5-5M.5 13.500l5-5" /></Icon>
        </button>
      </div>
    </footer>
  );
}

/* ---------- floating overlays ---------- */

function ImeBadge() {
  return (
    <div className="absolute right-[475px] bottom-[49px] z-20 flex h-[27px] w-[62px] items-center justify-center gap-1 rounded-md border border-[#8d8d8d] bg-white font-['Liberation_Sans','Noto_Sans_CJK_SC',sans-serif] text-[13px] text-[#333] shadow-[0_1px_3px_rgba(0,0,0,0.5)]">
      EN
      <Icon size={12}><path d="M5 1c4 3 3 7-4 9 4 2 9 1 9.500-4C10.500 3 8 1 5 1z" /></Icon>
      简
    </div>
  );
}

function Watermark() {
  return (
    <div className="pointer-events-none absolute right-2.5 bottom-1.5 z-20 flex items-start opacity-80">
      <svg width="43" height="40" viewBox="0 0 43 40" aria-hidden="true">
        <defs>
          <linearGradient id="wm-blue" x1="1" y1="0" x2="0" y2="1">
            <stop offset="0" stopColor="#3bb5ee" />
            <stop offset="1" stopColor="#2a62b8" />
          </linearGradient>
          <linearGradient id="wm-green" x1="1" y1="0" x2="0" y2="1">
            <stop offset="0" stopColor="#3fb56c" />
            <stop offset="1" stopColor="#e3e04a" />
          </linearGradient>
        </defs>
        <path d="M42 0C22 1 2 9 0 26c-1 10 14 10 22 5 5-4 4-10-1-11-4-1-8 1-9 4 3-2 7-1 6 1-2 4-9 5-9 0C9 17 20 6 42 0z" fill="url(#wm-blue)" />
        <path d="M25 15c6-2 15 0 15 7 0 9-12 16-24 17l-12-1c13-2 27-8 28-15 0-4-3-6-7-8z" fill="url(#wm-green)" />
      </svg>
      <div>
        <div className="mb-1 text-[21px] leading-[22px] font-bold text-[#4a8fd3]">极光下载站</div>
        <div className="font-['Liberation_Sans',sans-serif] text-[16px] leading-[18px] font-bold text-[#4fbf74]">www.xz7.com</div>
      </div>
    </div>
  );
}

export default function App() {
  return (
    <div className="relative flex h-screen flex-col overflow-hidden bg-white font-['Noto_Sans','Noto_Sans_CJK_SC',sans-serif] text-xs">
      <TitleBar />
      <MenuRow />
      <Ribbon />
      <FormulaBar />
      <Sheet />
      <SheetTabs />
      <StatusBar />
      <ImeBadge />
      <Watermark />
    </div>
  );
}
